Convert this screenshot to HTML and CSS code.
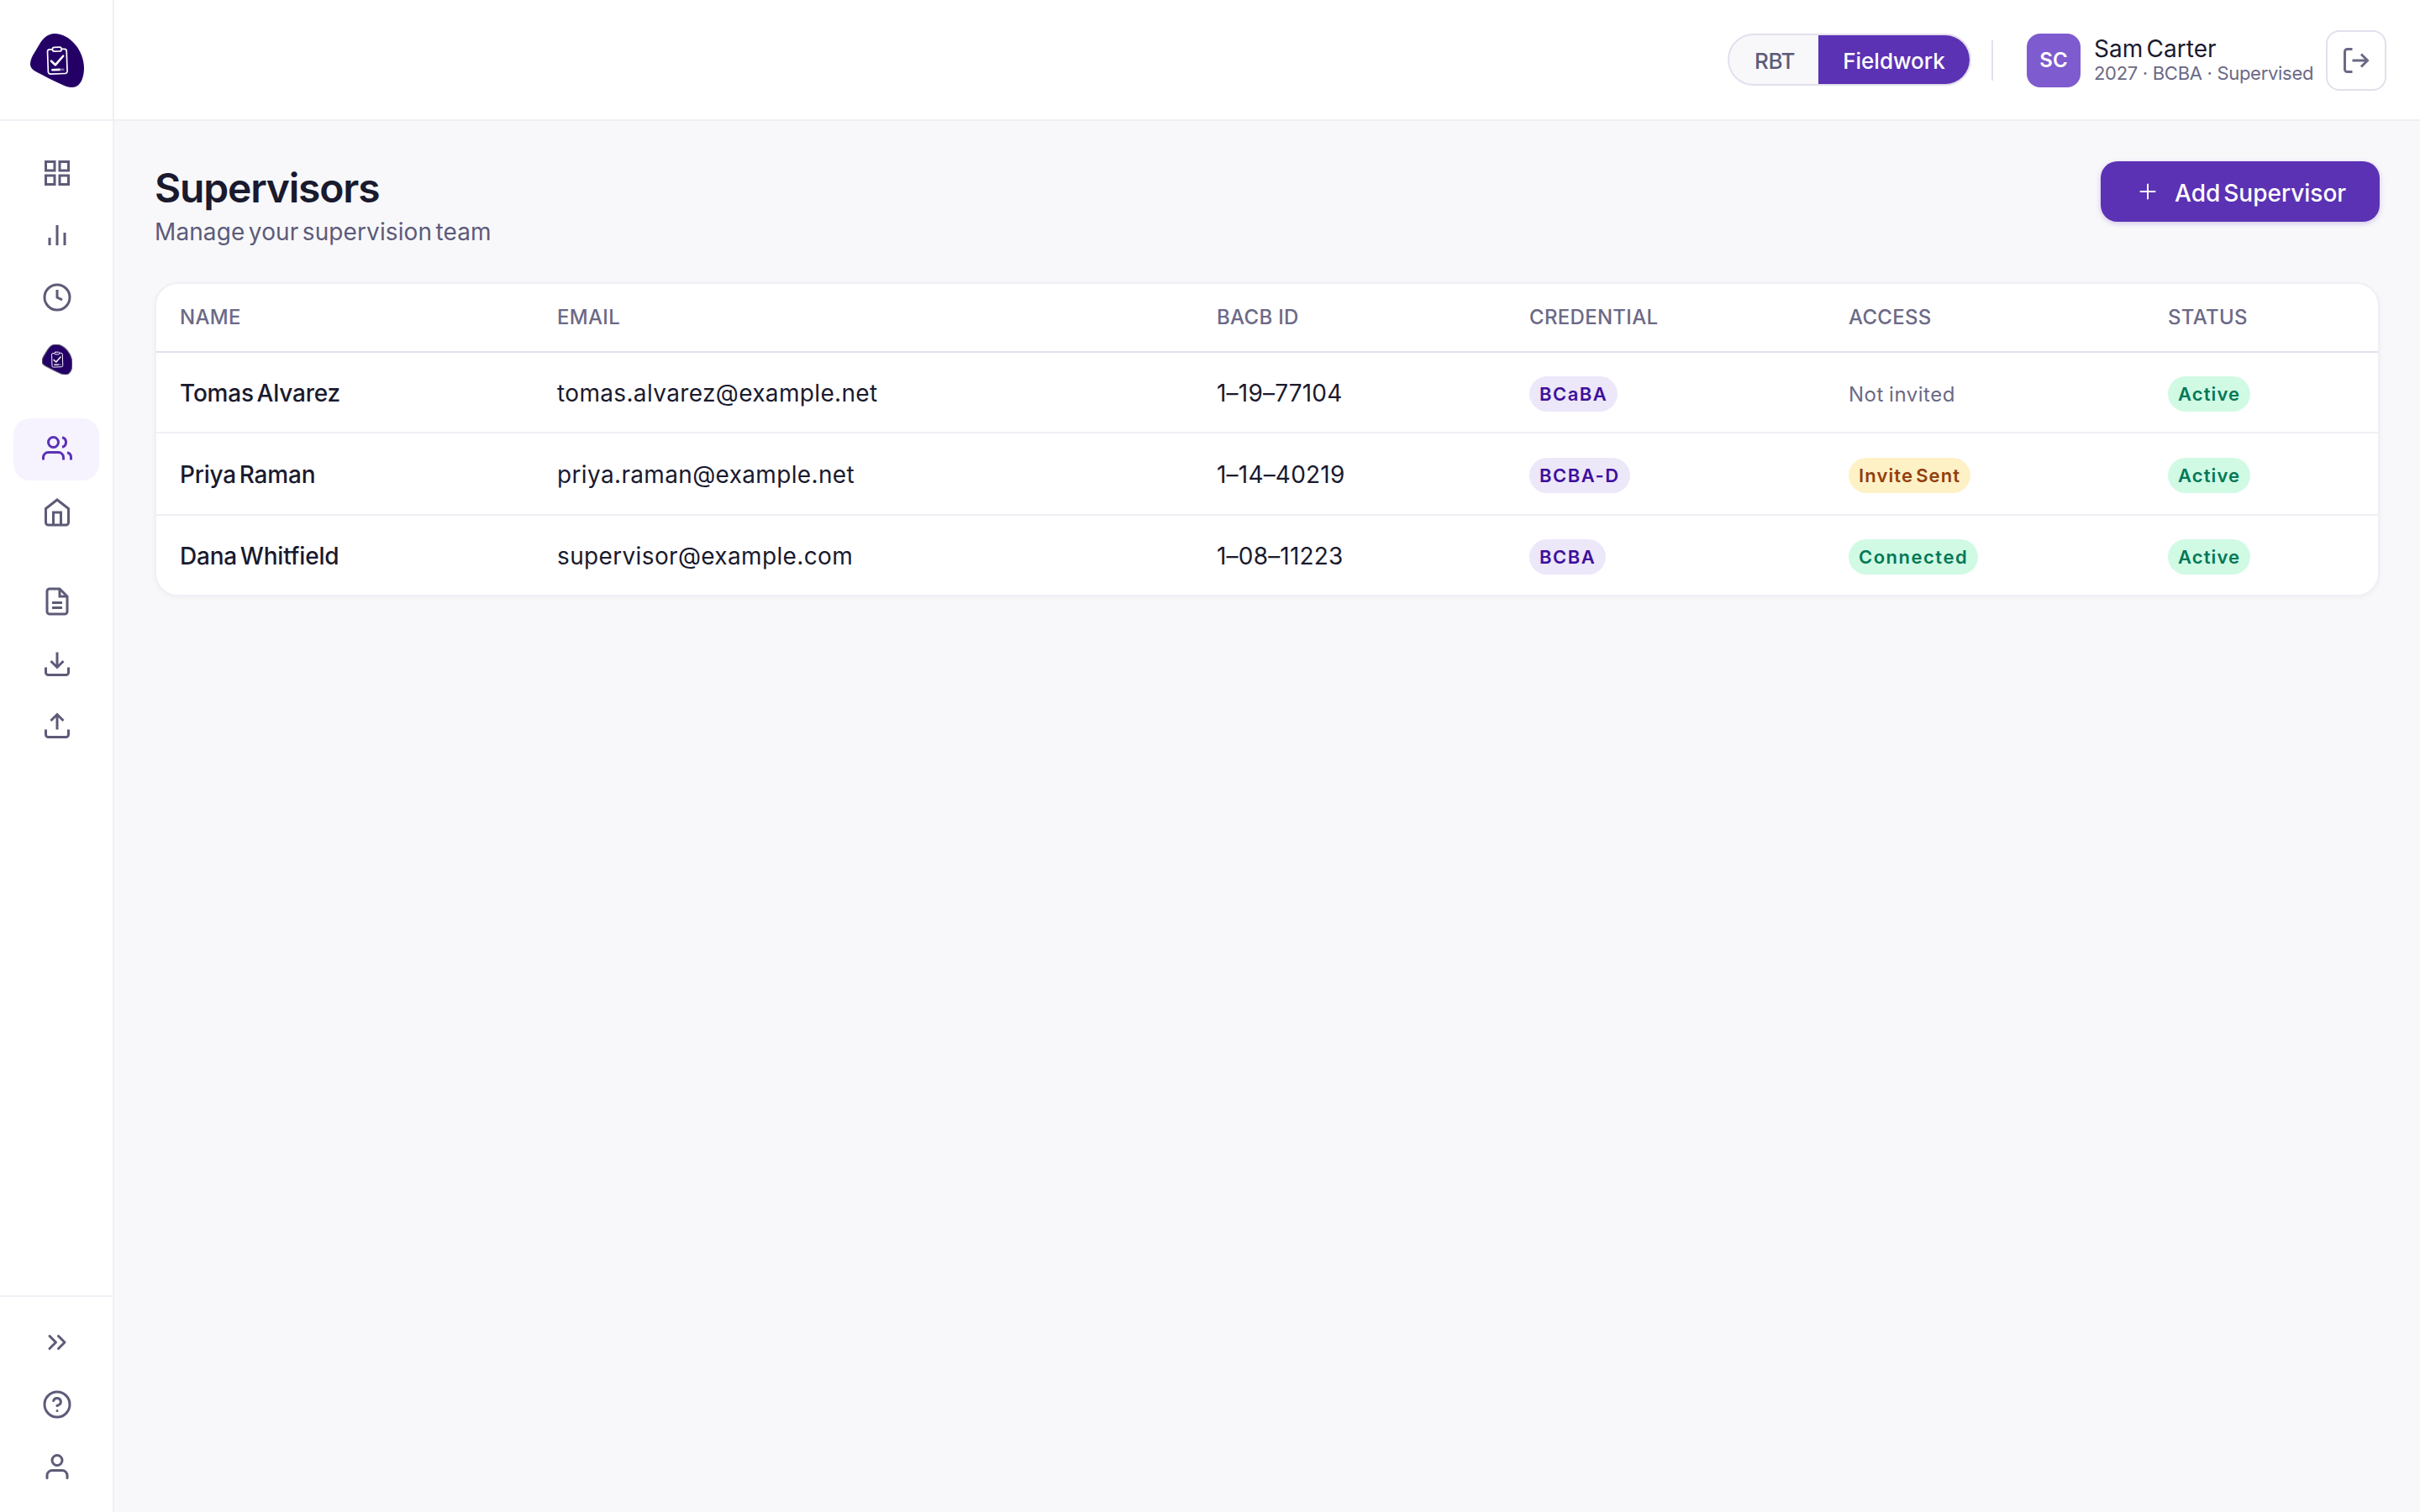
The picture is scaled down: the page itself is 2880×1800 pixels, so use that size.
FILE: index.html
```html
<!DOCTYPE html>
<html lang="en">
<head>
  <meta charset="UTF-8" />
  <meta name="viewport" content="width=device-width, initial-scale=1.0" />
  <title>Supervisors</title>
  <link rel="stylesheet" href="styles.css">
</head>
<body>
  <svg width="0" height="0" class="defs">
    <symbol id="logo" viewBox="0 0 64 64">
      <path fill="#240066" d="M29 0C21 0 16 5 12 11L3 26C1 30 0 33 0 36.500C0 41 4 44 9 46.500C18 51 25 55 34 59C40 62 45 64 50 64C60 64 64 52 64 41C64 20 47 0 29 0Z"/>
      <g fill="none" stroke="#fff" stroke-width="1.700" stroke-linecap="round" stroke-linejoin="round" transform="rotate(-2 32 32)">
        <path d="M26.500 18.600H23.500a2.600 2.600 0 0 0-2.600 2.600V45.200a2.600 2.600 0 0 0 2.600 2.600H41a2.600 2.600 0 0 0 2.600-2.600V21.200a2.600 2.600 0 0 0-2.600-2.600H38"/>
        <rect x="27" y="16.300" width="10.500" height="4.800" rx="2"/>
        <path stroke-width="2.600" d="M25 32.500l4.700 4.700L39.300 27"/>
        <path stroke-width="2.600" stroke-linecap="butt" opacity=".4" d="M34 43H40"/>
        <path stroke-width="2.600" stroke-linecap="butt" d="M25 43H35"/>
      </g>
    </symbol>
  </svg>

  <aside class="sidebar">
    <div class="brand"><svg><use href="#logo"/></svg></div>
    <nav class="nav">
      <div class="nav-group">
        <a class="nav-item"><svg class="icon" viewBox="0 0 24 24"><rect x="3" y="3" width="7" height="7"/><rect x="14" y="3" width="7" height="7"/><rect x="14" y="14" width="7" height="7"/><rect x="3" y="14" width="7" height="7"/></svg></a>
        <a class="nav-item"><svg class="icon" viewBox="0 0 24 24"><path d="M18 20V10M12 20V4M6 20v-6"/></svg></a>
        <a class="nav-item"><svg class="icon" viewBox="0 0 24 24"><circle cx="12" cy="12" r="10"/><path d="M12 6v6l4 2"/></svg></a>
        <a class="nav-item"><svg class="icon"><use href="#logo"/></svg></a>
      </div>
      <div class="nav-group">
        <a class="nav-item active"><svg class="icon" viewBox="0 0 24 24"><path d="M17 21v-2a4 4 0 0 0-4-4H5a4 4 0 0 0-4 4v2"/><circle cx="9" cy="7" r="4"/><path d="M23 21v-2a4 4 0 0 0-3-3.870M16 3.130a4 4 0 0 1 0 7.750"/></svg></a>
        <a class="nav-item"><svg class="icon" viewBox="0 0 24 24"><path d="M3 9l9-7 9 7v11a2 2 0 0 1-2 2H5a2 2 0 0 1-2-2z"/><path d="M9 22V12h6v10"/></svg></a>
      </div>
      <div class="nav-group">
        <a class="nav-item"><svg class="icon" viewBox="0 0 24 24"><path d="M14 2H6a2 2 0 0 0-2 2v16a2 2 0 0 0 2 2h12a2 2 0 0 0 2-2V8z"/><path d="M14 2v6h6M16 13H8M16 17H8"/></svg></a>
        <a class="nav-item"><svg class="icon" viewBox="0 0 24 24"><path d="M21 15v4a2 2 0 0 1-2 2H5a2 2 0 0 1-2-2v-4M7 10l5 5 5-5M12 15V3"/></svg></a>
        <a class="nav-item"><svg class="icon" viewBox="0 0 24 24"><path d="M21 15v4a2 2 0 0 1-2 2H5a2 2 0 0 1-2-2v-4M17 8l-5-5-5 5M12 3v12"/></svg></a>
      </div>
    </nav>
    <div class="sidebar-footer">
      <a class="nav-item"><svg class="icon round" viewBox="0 0 24 24"><path d="M13 17l5-5-5-5M6 17l5-5-5-5"/></svg></a>
      <a class="nav-item"><svg class="icon round" viewBox="0 0 24 24"><circle cx="12" cy="12" r="10"/><path d="M9.090 9a3 3 0 0 1 5.830 1c0 2-3 3-3 3M12 17h.01"/></svg></a>
      <a class="nav-item"><svg class="icon round" viewBox="0 0 24 24"><path d="M20 21v-2a4 4 0 0 0-4-4H8a4 4 0 0 0-4 4v2"/><circle cx="12" cy="7" r="4"/></svg></a>
    </div>
  </aside>

  <div class="main">
    <header class="topbar">
      <div class="toggle">
        <button class="toggle-btn rbt">RBT</button>
        <button class="toggle-btn on">Fieldwork</button>
      </div>
      <div class="divider"></div>
      <div class="avatar">SC</div>
      <div class="user">
        <div class="user-name">Sam Carter</div>
        <div class="user-meta">2027 · BCBA · Supervised</div>
      </div>
      <button class="logout"><svg class="icon" viewBox="0 0 24 24"><path d="M9 21H5a2 2 0 0 1-2-2V5a2 2 0 0 1 2-2h4M16 17l5-5-5-5M21 12H9"/></svg></button>
    </header>

    <main class="content">
      <div class="page-header">
        <div>
          <h1>Supervisors</h1>
          <p>Manage your supervision team</p>
        </div>
        <button class="add-btn">
          <svg viewBox="0 0 24 24"><path d="M12 5v14M5 12h14"/></svg>
          <span>Add Supervisor</span>
        </button>
      </div>

      <div class="card">
        <table>
          <colgroup>
            <col class="c-name"><col class="c-email"><col class="c-id"><col class="c-cred"><col class="c-access"><col>
          </colgroup>
          <thead>
            <tr>
              <th>Name</th>
              <th>Email</th>
              <th>BACB ID</th>
              <th>Credential</th>
              <th>Access</th>
              <th>Status</th>
            </tr>
          </thead>
          <tbody>
            <tr>
              <td class="name">Tomas Alvarez</td>
              <td class="email">tomas.alvarez@example.net</td>
              <td class="id">1–19–77104</td>
              <td><span class="badge purple">BCaBA</span></td>
              <td><span class="muted">Not invited</span></td>
              <td><span class="badge green">Active</span></td>
            </tr>
            <tr>
              <td class="name">Priya Raman</td>
              <td class="email">priya.raman@example.net</td>
              <td class="id">1–14–40219</td>
              <td><span class="badge purple">BCBA-D</span></td>
              <td><span class="badge yellow">Invite Sent</span></td>
              <td><span class="badge green">Active</span></td>
            </tr>
            <tr>
              <td class="name">Dana Whitfield</td>
              <td class="email">supervisor@example.com</td>
              <td class="id">1–08–11223</td>
              <td><span class="badge purple">BCBA</span></td>
              <td><span class="badge green connected">Connected</span></td>
              <td><span class="badge green">Active</span></td>
            </tr>
          </tbody>
        </table>
      </div>
    </main>
  </div>
</body>
</html>
```
FILE: styles.css
```css
* {
  box-sizing: border-box;
  margin: 0;
  padding: 0;
}

body {
  display: flex;
  height: 1800px;
  font-family: Inter, "Open Sans", sans-serif;
  font-size: 28px;
  font-weight: 375;
  word-spacing: -3.5px;
  color: #1a1a2e;
  background: #f8f8fb;
}

button {
  font: inherit;
  word-spacing: inherit;
  border: none;
  background: none;
}

.defs {
  position: absolute;
}

.icon {
  width: 36px;
  height: 36px;
  fill: none;
  stroke: currentColor;
  stroke-width: 2;
}

.round {
  stroke-linecap: round;
  stroke-linejoin: round;
}

/* Sidebar */
.sidebar {
  display: flex;
  flex-direction: column;
  width: 136px;
  background: #fff;
  border-right: 2px solid #f0eff5;
}

.brand {
  display: flex;
  align-items: center;
  justify-content: center;
  height: 144px;
  padding: 2px 0 0 2px;
  border-bottom: 2px solid #f0eff5;
}

.brand svg {
  width: 64px;
  height: 64px;
}

.nav {
  flex: 1;
  padding: 25px 16px 0;
}

.nav-group {
  margin-bottom: 32px;
}

.nav-item {
  display: flex;
  align-items: center;
  justify-content: center;
  height: 74px;
  padding-left: 2px;
  border-radius: 20px;
  color: #5d5b78;
}

.nav-item.active {
  margin: 33px 0 1px;
  padding-bottom: 2px;
  color: #5b32b4;
  background: #f6f3fe;
}

.sidebar-footer {
  padding: 17px 16px;
  border-top: 2px solid #f0eff5;
}

.sidebar-footer .nav-item:first-child {
  padding-bottom: 1px;
}

/* Top bar */
.main {
  flex: 1;
}

.topbar {
  display: flex;
  align-items: center;
  justify-content: flex-end;
  height: 144px;
  padding: 2px 40px 0 0;
  background: #fff;
  border-bottom: 2px solid #f0eff5;
}

.toggle {
  display: flex;
  width: 290px;
  height: 62px;
  margin-bottom: 2px;
  border: 2px solid #e2e0ec;
  border-radius: 31px;
  background: #f8f8fb;
  overflow: hidden;
}

.toggle-btn {
  flex: 1;
  padding-top: 2px;
  font-size: 26px;
  font-weight: 500;
  color: #5d5b78;
}

.toggle-btn.rbt {
  flex: 0 0 106px;
  padding-left: 2px;
  letter-spacing: -0.5px;
}

.toggle-btn.on {
  color: #fff;
  background: #5b32b4;
}

.divider {
  width: 2px;
  height: 48px;
  margin: 0 40px 0 24px;
  background: #e2e0ec;
}

.avatar {
  display: flex;
  align-items: center;
  justify-content: center;
  width: 64px;
  height: 64px;
  padding-bottom: 2px;
  border-radius: 16px;
  background: #7e5bce;
  color: #fff;
  font-size: 24px;
  font-weight: 600;
}

.user {
  width: 276px;
  margin: 0 0 3px 16px;
}

.user-name {
  font-weight: 400;
  line-height: 32px;
}

.user-meta {
  font-size: 22px;
  font-weight: 400;
  line-height: 26px;
  word-spacing: 0;
  letter-spacing: -0.3px;
  color: #6b6986;
}

.logout {
  display: flex;
  align-items: center;
  justify-content: center;
  width: 72px;
  height: 72px;
  border: 2px solid #e2e0ec;
  border-radius: 16px;
  color: #6b6986;
}

/* Page */
.content {
  padding: 48px;
}

.page-header {
  display: flex;
  align-items: flex-start;
  justify-content: space-between;
  height: 144px;
}

h1 {
  font-size: 48px;
  font-weight: 600;
  line-height: 64px;
  letter-spacing: -1.2px;
}

.page-header p {
  line-height: 40px;
  letter-spacing: 0.1px;
  color: #5d5b78;
}

.add-btn {
  display: flex;
  align-items: center;
  width: 332px;
  height: 72px;
  padding-left: 40px;
  gap: 16px;
  border-radius: 20px;
  background: #5b32b4;
  color: #fff;
  font-weight: 550;
  box-shadow: 0 2px 6px rgba(91, 50, 180, 0.25);
}

.add-btn span {
  padding-top: 3px;
}

.add-btn svg {
  width: 32px;
  height: 32px;
  stroke: #fff;
  stroke-width: 1.5;
}

.card {
  height: 374px;
  border: 2px solid #f0eff5;
  border-radius: 28px;
  background: #fff;
  box-shadow: 0 2px 6px rgba(26, 26, 46, 0.04);
  overflow: hidden;
}

table {
  width: 100%;
  table-layout: fixed;
  border-collapse: separate;
  border-spacing: 0;
}

.c-name { width: 449px; }
.c-email { width: 785px; }
.c-id { width: 372px; }
.c-cred { width: 380px; }
.c-access { width: 380px; }

th,
td {
  text-align: left;
  white-space: nowrap;
}

th {
  height: 82px;
  padding: 0 28px 2px;
  border-bottom: 2px solid #e2e0ec;
  font-size: 24px;
  font-weight: 550;
  word-spacing: 0;
  letter-spacing: 0.3px;
  text-transform: uppercase;
  color: #6b6986;
}

td {
  height: 96px;
  padding: 1px 28px 0;
  border-bottom: 2px solid #f0eff5;
}

tr:nth-child(2) td {
  height: 98px;
}

tr:last-child td {
  height: 94px;
  border-bottom: none;
}

.name {
  font-weight: 450;
  letter-spacing: -0.2px;
}

.email {
  letter-spacing: 0.35px;
}

.id {
  letter-spacing: 0.2px;
}

.muted {
  font-size: 24px;
  word-spacing: -1px;
  letter-spacing: 0.5px;
  color: #6b6986;
}

.badge {
  display: inline-block;
  margin-top: 3px;
  padding: 0 12px;
  border-radius: 21px;
  font-size: 22px;
  font-weight: 600;
  line-height: 42px;
  letter-spacing: 1.1px;
}

.purple {
  letter-spacing: 1.5px;
}

.purple {
  color: #3e0f9c;
  background: #ece7f9;
}

.yellow {
  color: #923f0e;
  background: #fef1c6;
}

.green {
  color: #047857;
  background: #d0fae4;
}

.connected {
  letter-spacing: 1.5px;
}
```
